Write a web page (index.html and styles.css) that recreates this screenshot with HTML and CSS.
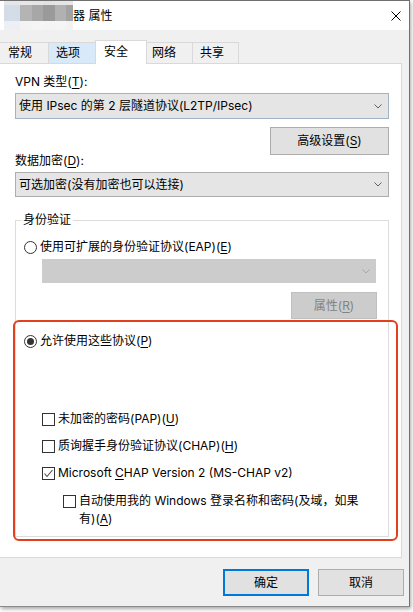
FILE: index.html
```html
<!DOCTYPE html>
<html lang="zh-CN">
<head>
<meta charset="utf-8">
<title>属性</title>
<link rel="stylesheet" href="styles.css">
</head>
<body>
<div class="window">
  <div class="titlebar">
    <div class="mosaic">
      <span></span><span></span><span></span><span></span><span></span><span></span>
      <span></span><span></span><span></span><span></span><span></span><span></span>
      <span></span><span></span><span></span><span></span><span></span><span></span>
    </div>
    <span class="title">器 属性</span>
    <svg class="close" width="10" height="10" viewBox="0 0 10 10"><path d="M0.5 0.5L9.5 9.5M9.5 0.5L0.5 9.5" stroke="#000" stroke-width="1" fill="none"/></svg>
  </div>
  <div class="content">
    <div class="tabs">
      <div class="tab first">常规</div>
      <div class="tab hover">选项</div>
      <div class="tab active">安全</div>
      <div class="tab">网络</div>
      <div class="tab">共享</div>
    </div>
    <div class="panel">
      <div class="label">VPN 类型(<u>T</u>):</div>
      <div class="select focus">
        <span>使用 IPsec 的第 2 层隧道协议(L2TP/IPsec)</span>
        <svg class="chev" width="8" height="5" viewBox="0 0 8 5"><polyline points="0.5,0.5 4,4 7.5,0.5" stroke="#606060" stroke-width="1" fill="none"/></svg>
      </div>
      <div class="btnrow"><div class="btn adv">高级设置(<u>S</u>)</div></div>
      <div class="label l2">数据加密(<u>D</u>):</div>
      <div class="select s2">
        <span>可选加密(没有加密也可以连接)</span>
        <svg class="chev" width="8" height="5" viewBox="0 0 8 5"><polyline points="0.5,0.5 4,4 7.5,0.5" stroke="#606060" stroke-width="1" fill="none"/></svg>
      </div>
      <fieldset class="group">
        <legend>身份验证</legend>
        <div class="opt r-eap"><span class="radio"></span><span>使用可扩展的身份验证协议(EAP)(<u>E</u>)</span></div>
        <div class="select disabled">
          <span></span>
          <svg class="chev" width="8" height="5" viewBox="0 0 8 5"><polyline points="0.5,0.5 4,4 7.5,0.5" stroke="#a6a6a6" stroke-width="1" fill="none"/></svg>
        </div>
        <div class="btnrow"><div class="btn prop">属性(<u>R</u>)</div></div>
        <div class="opt r-allow"><span class="radio checked"><span class="dot"></span></span><span>允许使用这些协议(<u>P</u>)</span></div>
        <div class="opt chk c-pap"><span class="cb"></span><span>未加密的密码(PAP)(<u>U</u>)</span></div>
        <div class="opt chk c-next"><span class="cb"></span><span>质询握手身份验证协议(CHAP)(<u>H</u>)</span></div>
        <div class="opt chk c-next"><span class="cb"><svg width="11" height="11" viewBox="0 0 11 11"><polyline points="1.5,5.5 4,8.5 9.5,2" stroke="#4a4a4a" stroke-width="1.1" fill="none"/></svg></span><span>Microsoft <u>C</u>HAP Version 2 (MS-CHAP v2)</span></div>
        <div class="opt chk wrap"><span class="cb"></span><span class="wraptext">自动使用我的 Windows 登录名称和密码(及域，如果有)(<u>A</u>)</span></div>
      </fieldset>
      <div class="highlight"></div>
    </div>
    <div class="footer">
      <div class="btn ok">确定</div>
      <div class="btn">取消</div>
    </div>
  </div>
</div>
</body>
</html>
```

FILE: styles.css
```css
* { box-sizing: border-box; }
html, body { margin: 0; padding: 0; }
body {
  background: #fff;
  width: 413px;
  height: 612px;
  overflow: hidden;
  font-family: "Inter", "Noto Sans CJK SC", sans-serif;
  font-size: 12px;
  color: #000;
}
u { text-decoration: underline; text-underline-offset: 2px; text-decoration-thickness: 1px; }

.window {
  width: 410px;
  height: 607px;
  border-top: 1px solid #707070;
  border-right: 1px solid #707070;
  border-bottom: 1px solid #8a8a8a;
  background: #f0f0f0;
  box-shadow: 1px 2px 4px rgba(0,0,0,0.35);
  display: flex;
  flex-direction: column;
}

.titlebar {
  height: 29px;
  background: #fff;
  display: flex;
  align-items: center;
  flex: none;
}
.mosaic {
  margin-left: 4px;
  align-self: stretch;
  display: grid;
  grid-template-columns: 16px 12px 11px 12px 11px 7px;
  grid-template-rows: 4px 16px 9px;
}
.mosaic span:nth-child(1) { background: #e3e6ea; }
.mosaic span:nth-child(2) { background: #e6e6e6; }
.mosaic span:nth-child(3) { background: #e4e4e4; }
.mosaic span:nth-child(4) { background: #e2e2e2; }
.mosaic span:nth-child(5) { background: #e5e5e5; }
.mosaic span:nth-child(6) { background: #e6e6e6; }
.mosaic span:nth-child(7) { background: #d4dce7; }
.mosaic span:nth-child(8) { background: #b4b4b4; }
.mosaic span:nth-child(9) { background: #a7a7a7; }
.mosaic span:nth-child(10) { background: #9a9a9a; }
.mosaic span:nth-child(11) { background: #b1b1b1; }
.mosaic span:nth-child(12) { background: #a2a2a2; }
.mosaic span:nth-child(13) { background: #eceff4; }
.mosaic span:nth-child(14) { background: #f3f3f3; }
.mosaic span:nth-child(15) { background: #f5f5f5; }
.mosaic span:nth-child(16) { background: #f4f4f4; }
.mosaic span:nth-child(17) { background: #f5f5f5; }
.mosaic span:nth-child(18) { background: #f2f2f2; }

.title { line-height: 16px; font-size: 12px; }
.close { margin-left: auto; margin-right: 8px; display: block; }

.content { flex: 1; display: flex; flex-direction: column; }

.tabs {
  margin-top: 10px;
  height: 23px;
  display: flex;
  align-items: flex-start;
  margin-left: -1px;
  position: relative;
  z-index: 1;
}
.tab {
  margin-top: 2px;
  height: 21px;
  border: 1px solid #d9d9d9;
  border-bottom: none;
  background: #f0f0f0;
  padding-left: 7px;
  line-height: 20px;
  margin-left: -1px;
  width: 48px;
}
.tab.first { margin-left: 0; width: 50px; padding-left: 8px; }
.tab.hover { background: #d8eaf9; }
.tab.active {
  margin-top: 0;
  height: 24px;
  width: 52px;
  background: #fff;
  padding-left: 8px;
  line-height: 22px;
}
.tab.active + .tab { width: 47px; padding-left: 5px; }
.tab:last-child { width: 47px; }

.panel {
  position: relative;
  margin-left: -1px;
  width: 403px;
  height: 495px;
  border: 1px solid #d9d9d9;
  background: #fff;
  padding: 10px 12px 0 15px;
  display: flex;
  flex-direction: column;
}
.label { line-height: 15px; }
.label.l2 { margin-top: -2px; }

.select {
  margin-top: 4px;
  height: 26px;
  border: 1px solid #adadad;
  background: #e5e5e5;
  display: flex;
  align-items: center;
  justify-content: space-between;
  padding: 0 6px 0 3px;
  line-height: 16px;
}
.select.focus { border-color: #a3b3c6; }
.select.s2 { height: 25px; }
.chev { display: block; }

.btnrow { display: flex; justify-content: flex-end; }
.btn {
  height: 28px;
  border: 1px solid #adadad;
  background: #e1e1e1;
  display: flex;
  align-items: center;
  justify-content: center;
  line-height: 16px;
}
.btn.adv { margin-top: 8px; width: 119px; }

.group {
  margin: 16px 0 0 0;
  width: 374px;
  border: 1px solid #dcdcdc;
  padding: 12px 11px 9px 8px;
  min-width: 0;
}
.group legend {
  padding: 0 2px;
  margin-left: -3px;
  line-height: 14px;
}
.opt { display: flex; align-items: center; line-height: 16px; }
.radio {
  width: 13px;
  height: 13px;
  border: 1px solid #333;
  border-radius: 50%;
  margin-right: 3px;
  background: #fff;
  display: flex;
  align-items: center;
  justify-content: center;
  flex: none;
}
.dot { width: 7px; height: 7px; border-radius: 50%; background: #333; }
.select.disabled {
  margin-top: 4px;
  margin-left: 18px;
  width: 334px;
  height: 24px;
  background: #cccccc;
  border-color: #cccccc;
  padding-right: 5px;
}
.btn.prop {
  margin-top: 9px;
  width: 86px;
  height: 27px;
  background: #cccccc;
  border-color: #bfbfbf;
  color: #838383;
}
.r-allow { margin-top: 14px; }
.chk { padding-left: 18px; }
.c-pap { margin-top: 62px; }
.c-next { margin-top: 11px; }
.cb {
  width: 13px;
  height: 13px;
  border: 1px solid #333;
  background: #fff;
  margin-right: 3px;
  flex: none;
  display: flex;
  align-items: center;
  justify-content: center;
}
.cb svg { display: block; }
.opt.wrap {
  margin-top: 11px;
  padding-left: 39px;
  align-items: flex-start;
  line-height: 17.5px;
}
.opt.wrap .cb { margin-top: 3px; }
.wraptext { width: 285px; }

.highlight {
  position: absolute;
  left: 13px;
  top: 256px;
  width: 385px;
  height: 221px;
  border: 2px solid #e0401c;
  border-radius: 6px;
  pointer-events: none;
}

.footer {
  margin-top: 11px;
  display: flex;
  justify-content: flex-end;
  gap: 9px;
  padding-right: 5px;
}
.footer .btn { width: 86px; height: 27px; }
.footer .btn.ok { border: 2px solid #0078d7; }
```
